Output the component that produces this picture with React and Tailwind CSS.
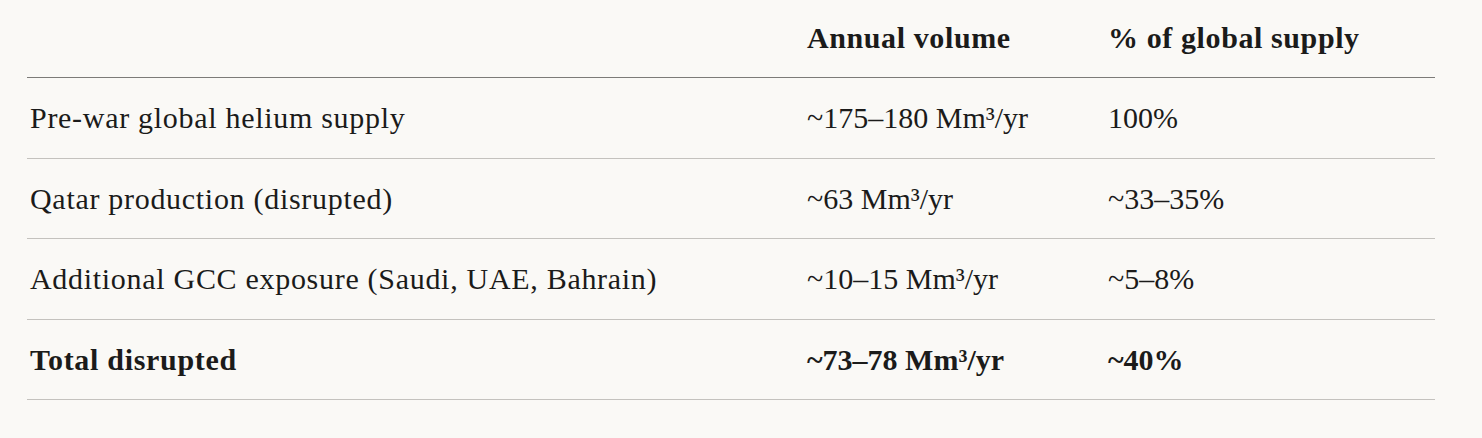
import React from 'react'

const rows = [
  { label: 'Pre-war global helium supply', volume: '~175–180 Mm³/yr', share: '100%' },
  { label: 'Qatar production (disrupted)', volume: '~63 Mm³/yr', share: '~33–35%' },
  { label: 'Additional GCC exposure (Saudi, UAE, Bahrain)', volume: '~10–15 Mm³/yr', share: '~5–8%' },
  { label: 'Total disrupted', volume: '~73–78 Mm³/yr', share: '~40%', bold: true },
]

export default function App() {
  return (
    <div className="min-h-[438px] w-full bg-[#faf9f6] text-[#1b1b1a] font-['Liberation_Serif',serif]">
      <div className="ml-[27px] w-[1408px]">
        {/* header */}
        <div className="grid grid-cols-[777px_301px_1fr] h-[78px] items-center border-b border-[#7c7b78] text-[30px] font-bold tracking-[0.6px]">
          <div></div>
          <div className="pl-[3px] pb-[3px]">Annual volume</div>
          <div className="pl-[3px] pb-[3px]">% of global supply</div>
        </div>

        {rows.map((r) => (
          <div
            key={r.label}
            className={`grid grid-cols-[777px_301px_1fr] h-[80.5px] items-center border-b border-[#c4c2be] text-[30px] ${r.bold ? 'font-bold' : ''}`}
          >
            <div className="pl-[3px] tracking-[0.7px]">{r.label}</div>
            <div className="pl-[3px]">{r.volume}</div>
            <div className="pl-[3px]">{r.share}</div>
          </div>
        ))}
      </div>
    </div>
  )
}
